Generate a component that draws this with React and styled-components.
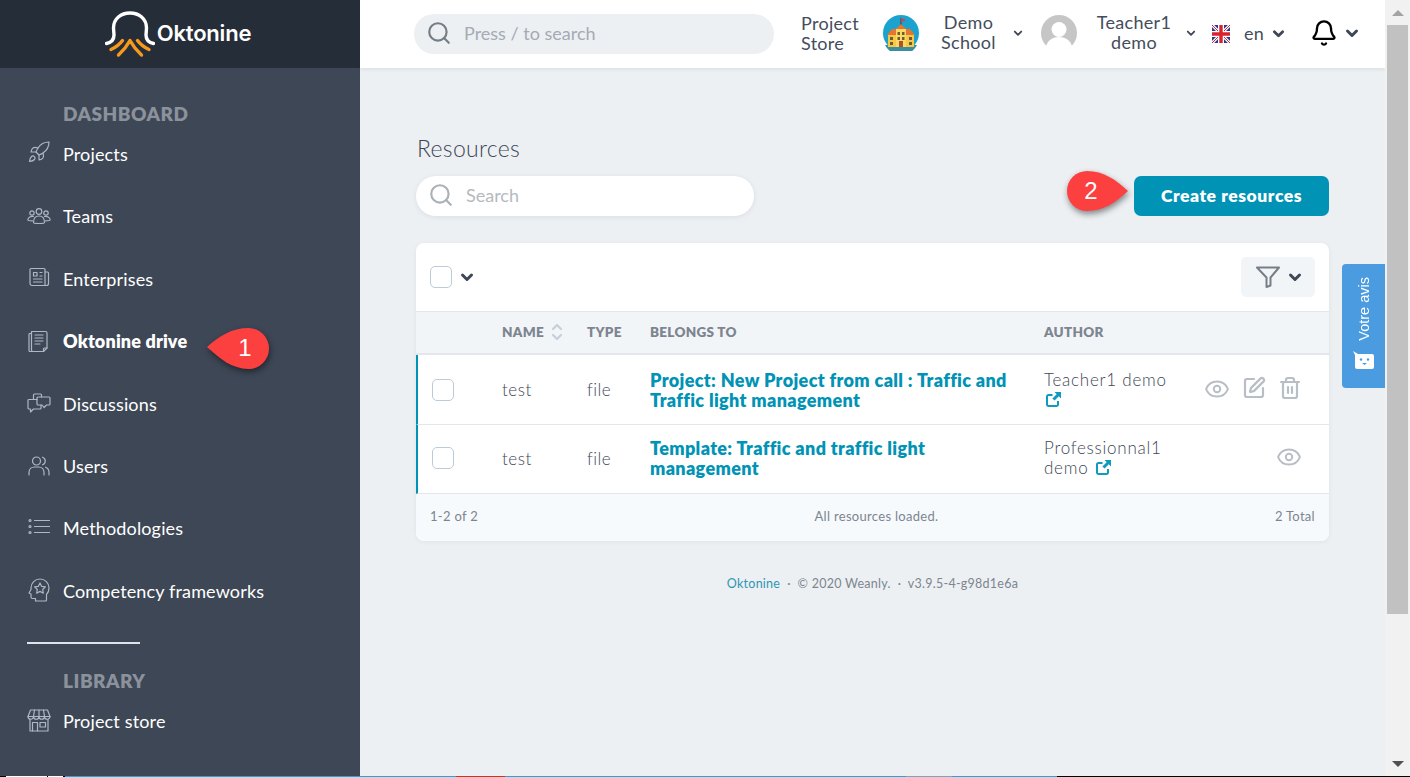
import React from 'react';
import styled, { createGlobalStyle } from 'styled-components';
import { Search, Eye, SquarePen, Trash2, Bell, Rocket } from 'lucide-react';

const FONT = '"Lato", "Open Sans", sans-serif';

const GlobalStyle = createGlobalStyle`
    html, body {
        margin: 0;
        padding: 0;
        height: 100%;
        overflow: hidden;
    }
    body {
        font-family: ${FONT};
        color: #3e4756;
        background: #ecf0f3;
    }
    * { box-sizing: border-box; }
`;

const Screen = styled.div`
    width: 1410px;
    height: 777px;
    display: flex;
    flex-direction: column;
    overflow: hidden;
`;

const Window = styled.div`
    flex: 1;
    min-height: 0;
    display: flex;
    position: relative;
`;

/* sidebar */
const Sidebar = styled.aside`
    width: 360px;
    flex: none;
    background: #3e4756;
    color: #fff;
`;

const LogoBar = styled.div`
    height: 68px;
    background: #252d38;
    display: flex;
    align-items: center;
    justify-content: center;
    gap: 2px;
    padding-right: 4px;
`;

const LogoText = styled.span`
    font-family: "Inter", sans-serif;
    font-size: 22px;
    font-weight: 600;
    letter-spacing: -0.2px;
    position: relative;
    top: -1px;
`;

const Nav = styled.nav`
    padding: 35px 0 0 27px;
`;

const NavHeading = styled.div`
    height: 19.8px;
    line-height: 22px;
    padding-left: 36px;
    font-size: 19px;
    font-weight: 800;
    letter-spacing: 0.5px;
    color: #8b929c;
    margin-top: ${p => p.$top || 0}px;
`;

const NavItem = styled.a`
    height: 62.4px;
    display: flex;
    align-items: center;
    font-size: 18px;
    letter-spacing: 0.15px;
    font-weight: ${p => (p.$active ? 800 : 400)};
    color: #fff;

    svg {
        width: 24px;
        height: 24px;
        margin-right: 12px;
        margin-top: ${p => p.$iconShift || 0}px;
        color: #aeb8c4;
        flex: none;
        fill: none;
        stroke: currentColor;
        stroke-width: 1.2;
        stroke-linecap: round;
        stroke-linejoin: round;
    }
`;

const NavRule = styled.div`
    width: 113px;
    height: 2px;
    margin-top: 20px;
    background: #dfe4ea;
`;

/* top bar */
const Page = styled.div`
    flex: 1;
    min-width: 0;
    display: flex;
    flex-direction: column;
`;

const TopBar = styled.header`
    height: 68px;
    flex: none;
    background: #fff;
    box-shadow: 0 1px 4px rgba(62, 71, 86, .12);
    display: flex;
    align-items: center;
    padding: 0 0 2px 54px;
`;

const SearchBox = styled.div`
    height: 40px;
    flex: none;
    border-radius: 20px;
    display: flex;
    align-items: center;
    gap: 12px;
    padding: 0 0 2px 12px;
    font-size: 18px;
    color: #a4abb4;
`;

const HeaderSearch = styled(SearchBox)`
    width: 360px;
    margin-top: 2px;
    background: #edf0f3;

    svg { color: #757d85; }
`;

const PageSearch = styled(SearchBox)`
    width: 338px;
    background: #fff;
    color: #b5bac0;
    box-shadow: 0 1px 5px rgba(62, 71, 86, .1);

    svg { color: #aab1b8; }
`;

const HeaderText = styled.div`
    width: ${p => p.$w}px;
    margin-left: ${p => p.$ml || 0}px;
    margin-top: ${p => p.$mt || 0}px;
    font-size: 18px;
    line-height: 20px;
    letter-spacing: 0.3px;
    text-align: ${p => p.$align || 'center'};
    color: #444d5c;
    flex: none;
`;

const Avatar = styled.svg`
    width: 36px;
    height: 36px;
    margin-left: ${p => p.$ml || 0}px;
    flex: none;
`;

const Caret = styled.svg`
    width: ${p => p.$size || 13}px;
    height: ${p => p.$size || 13}px;
    margin-left: ${p => p.$ml || 0}px;
    flex: none;
    fill: none;
    stroke: #3e4756;
    stroke-width: ${p => p.$weight || 3};
    stroke-linecap: round;
    stroke-linejoin: round;
`;

const Flag = styled.svg`
    width: 18px;
    height: 18px;
    margin: 2px 0 0 16px;
    flex: none;
`;

const BellButton = styled.span`
    display: flex;
    margin-left: 25px;
    color: #000;
`;

/* content */
const Content = styled.main`
    flex: 1;
    padding: 68px 56px 0 56px;
`;

const Title = styled.h1`
    margin: 0 0 0 1px;
    height: 26px;
    line-height: 24px;
    font-size: 23px;
    font-weight: 300;
    letter-spacing: 0.3px;
    color: #3e4756;
`;

const ToolRow = styled.div`
    display: flex;
    justify-content: space-between;
    align-items: center;
    margin-top: 14px;
`;

const PrimaryButton = styled.button`
    width: 195px;
    height: 40px;
    padding: 0 0 2px;
    border: none;
    border-radius: 7px;
    background: #0093b5;
    color: #fff;
    font-family: ${FONT};
    font-size: 17.5px;
    font-weight: 800;
    letter-spacing: 0.55px;
`;

const Card = styled.section`
    margin-top: 27px;
    border-radius: 8px;
    background: #fff;
    box-shadow: 0 1px 4px rgba(62, 71, 86, .08);
    overflow: hidden;
`;

const CardTools = styled.div`
    height: 68px;
    display: flex;
    align-items: center;
    justify-content: space-between;
    padding: 0 14px;
`;

const BulkSelect = styled.div`
    display: flex;
    align-items: center;
    gap: 8px;
`;

const CheckBox = styled.span`
    display: block;
    width: 22px;
    height: 22px;
    border: 1px solid #bccbd9;
    border-radius: 5px;
    background: #fff;
`;

const FilterButton = styled.div`
    width: 74px;
    height: 40px;
    border-radius: 5px;
    background: #f2f5f8;
    display: flex;
    align-items: center;
    justify-content: center;
    gap: 7px;
`;

const HeadRow = styled.div`
    display: grid;
    grid-template-columns: 86px 85px 63px 394px 134px 1fr;
    align-items: center;
    height: 44px;
    padding-bottom: 2px;
    background: #f2f5f8;
    border-top: 1px solid #e3e7ec;
    border-bottom: 2px solid #e3e7ec;
    font-size: 13.5px;
    font-weight: 800;
    letter-spacing: 0.28px;
    color: #7d8590;
`;

const HeadCell = styled.div`
    display: flex;
    align-items: center;
    gap: 7px;
`;

const Row = styled.div`
    display: grid;
    grid-template-columns: 84px 85px 63px 394px 134px 1fr;
    align-items: center;
    height: ${p => p.$h}px;
    padding-bottom: ${p => p.$pb || 0}px;
    border-left: 2px solid #0093b5;
    border-bottom: 1px solid #e3e7ec;
    font-size: 17px;
    font-weight: 300;
    letter-spacing: 0.5px;
`;

const CheckCell = styled.div`
    padding-left: 14px;
`;

const RowLink = styled.a`
    padding-right: 14px;
    font-size: 18px;
    font-weight: 800;
    line-height: 20px;
    letter-spacing: 0.35px;
    color: #0093b5;
`;

const Author = styled.div`
    line-height: 20px;
    letter-spacing: 0.75px;

    svg {
        margin-left: 2px;
        vertical-align: -1px;
    }
`;

const RowActions = styled.div`
    display: flex;
    justify-content: flex-end;
    gap: 12px;
    padding: 0 27px 2px 0;
    color: #b8bec5;
`;

const CardFooter = styled.div`
    height: 47px;
    display: grid;
    grid-template-columns: 1fr auto 1fr;
    align-items: center;
    padding: 0 14px 4px;
    background: #f6fafd;
    font-size: 13px;
    letter-spacing: 0.3px;
    color: #7d8590;
`;

const FooterCentre = styled.span`
    padding-left: 8px;
`;

const FooterRight = styled.span`
    text-align: right;
`;

const Credits = styled.p`
    margin: 34px 0 0;
    text-align: center;
    font-size: 12.5px;
    line-height: 18px;
    letter-spacing: 0.26px;
    color: #7d8590;

    a { color: #2f96b4; }
`;

/* overlays */
const Callout = styled.div`
    position: absolute;
    left: ${p => p.$x}px;
    top: ${p => p.$y}px;
    width: 66px;
    height: 44px;
    display: flex;
    align-items: center;
    justify-content: center;
    color: #fff;
    font-family: "Liberation Sans", sans-serif;
    font-size: 24px;

    svg {
        position: absolute;
        inset: 0;
        overflow: visible;
        filter: drop-shadow(1px 3px 3px rgba(0, 0, 0, .45));
    }
    span {
        position: relative;
        left: ${p => p.$textShift}px;
    }
`;

const FeedbackTab = styled.div`
    position: absolute;
    left: 1342px;
    top: 264px;
    width: 43px;
    height: 124px;
    border-radius: 4px 0 0 4px;
    background: #4a9be0;
    color: #fff;
    display: flex;
    flex-direction: column;
    align-items: center;
    padding-top: 13px;
    gap: 10px;
    font-family: "Liberation Sans", sans-serif;
    font-size: 14.5px;
`;

const FeedbackLabel = styled.span`
    writing-mode: vertical-rl;
    transform: rotate(180deg);
`;

/* browser chrome */
const Scrollbar = styled.div`
    width: 25px;
    flex: none;
    background: #f1f1f1;
    display: flex;
    flex-direction: column;
    align-items: center;
`;

const ScrollArrow = styled.div`
    height: 25px;
    flex: none;
    display: flex;
    align-items: center;
    justify-content: center;

    &::before {
        content: "";
        border-left: 6px solid transparent;
        border-right: 6px solid transparent;
        ${p => (p.$down
            ? 'border-top: 6px solid #505050;'
            : 'border-bottom: 6px solid #a3a3a3;')}
    }
`;

const ScrollThumb = styled.div`
    width: 21px;
    height: 589px;
    background: #c1c1c1;
`;

const ScrollTrack = styled.div`
    flex: 1;
`;

const TaskStrip = styled.div`
    height: 1px;
    flex: none;
    display: flex;
`;

const StripPart = styled.span`
    width: ${p => p.$w}px;
    background: ${p => p.$c};
`;

const stripParts = [
    [6, '#000'], [41, '#fff'], [1, '#000'], [15, '#fff'], [2, '#000'],
    [391, '#1ca8e0'], [49, '#d23020'], [401, '#1ca8e0'], [46, '#7ba6b8'],
    [105, '#1ca8e0'], [353, '#000'],
];

const Chevron = props => (
    <Caret viewBox="0 0 14 14" {...props}>
        <path d="M2.5 5l4.5 4.5L11.5 5" />
    </Caret>
);

const TeamsIcon = () => (
    <svg viewBox="0 0 24 24">
        <circle cx="12" cy="7.5" r="2.8" />
        <circle cx="5" cy="9" r="2.2" />
        <circle cx="19" cy="9" r="2.2" />
        <path d="M6.5 18.5c0-4.5 2-6.5 5.5-6.5s5.5 2 5.5 6.5c0 .7-1 1-5.5 1s-5.5-.3-5.5-1z" />
        <path d="M6.5 12.5C4 12 1 13 .8 16c0 .5.5.8 4.7.8" />
        <path d="M17.5 12.5c2.5-.5 5.5.5 5.7 3.5 0 .5-.5.8-4.7.8" />
    </svg>
);

const PaperIcon = () => (
    <svg viewBox="0 0 24 24" strokeWidth="1.5">
        <path d="M4 3.5h13a1 1 0 0 1 1 1v16H5a2 2 0 0 1-2-2v-14a1 1 0 0 1 1-1z" />
        <path d="M18 7h2.5a1 1 0 0 1 1 1v10.5a2 2 0 0 1-2 2H18" />
        <path d="M6.5 7.5H10V11H6.5zM13 7.5h2M13 11h2M6.5 14H15M6.5 17H15" />
    </svg>
);

const DriveIcon = () => (
    <svg viewBox="0 0 24 24">
        <path d="M4.5 2.5h14A1.5 1.5 0 0 1 20 4v15l-3.5 3.5H6A1.5 1.5 0 0 1 4.5 21z" />
        <path d="M4.5 4.5H3a1 1 0 0 0-1 1v16a1 1 0 0 0 1 1h12" />
        <path d="M20 19h-2.5a1 1 0 0 0-1 1v2.5" />
        <path d="M8 6h8M8 9h8M8 12h8M8 15h5" />
    </svg>
);

const ChatIcon = () => (
    <svg viewBox="0 0 24 24">
        <path d="M14.5 6V4a1 1 0 0 0-1-1h-6a1 1 0 0 0-1 1v4.5" />
        <path d="M10 8.5H2a1 1 0 0 0-1 1V17a1 1 0 0 0 1 1h1.5v3l3-3H13a1 1 0 0 0 1-1v-3" />
        <path d="M11 6h11a1 1 0 0 1 1 1v6a1 1 0 0 1-1 1h-2.5L17 16.5 15 14h-4a1 1 0 0 1-1-1V7a1 1 0 0 1 1-1z" />
    </svg>
);

const UsersIcon = () => (
    <svg viewBox="0 0 24 24" strokeWidth="1.4">
        <circle cx="9.5" cy="7" r="4" />
        <path d="M2 21v-2.5C2 15 4.5 13 7.5 13h4c3 0 5.5 2 5.5 5.5V21" />
        <path d="M15.5 3.2a4 4 0 0 1 0 7.6" />
        <path d="M18.5 13.2c2.2.7 3.5 2.500 3.5 5.3V21" />
    </svg>
);

const ListIcon = () => (
    <svg viewBox="0 0 24 24" strokeWidth="1.3">
        <path d="M7.5 5.5h15M7.5 11.5h15M7.5 17.5h15" />
        <circle cx="3" cy="5.5" r="1" />
        <circle cx="3" cy="11.5" r="1" />
        <circle cx="3" cy="17.5" r="1" />
    </svg>
);

const HeadIcon = () => (
    <svg viewBox="0 0 24 24">
        <path d="M8.5 23v-2.5h-3A1.5 1.5 0 0 1 4 19v-3l-2-1 2-3.5V10a9 9 0 0 1 18 0c0 3-1 5-2.5 6.5V22a1 1 0 0 1-1 1z" />
        <path d="M13 5l1.7 3.4 3.7.5-2.7 2.6.6 3.7-3.3-1.8-3.3 1.8.6-3.7-2.7-2.6 3.7-.5z" />
    </svg>
);

const StoreIcon = () => (
    <svg viewBox="0 0 24 24">
        <path d="M3.5 2h17L23 8.500H1z" />
        <path d="M1 8.5a2.750 2.750 0 0 0 5.5 0 2.750 2.750 0 0 0 5.500 0 2.750 2.750 0 0 0 5.500 0 2.750 2.750 0 0 0 5.500 0" />
        <path d="M7.5 2L6.500 8.500M12 2v6.500M16.500 2l1 6.500" />
        <path d="M3 11.5V23h18V11.500" />
        <path d="M5.5 23v-8.500h5V23M13 14.500h5.500V19H13z" />
    </svg>
);

const LinkOutIcon = () => (
    <svg width="15" height="15" viewBox="0 0 15 15" fill="none">
        <path
            d="M6.5 3h-4A1.5 1.5 0 0 0 1 4.500v8A1.500 1.500 0 0 0 2.500 14h8a1.500 1.500 0 0 0 1.500-1.500V9"
            stroke="#0e9bbd"
            strokeWidth="2"
        />
        <path d="M8.5 0H15v6.500l-2.200-2.200-4.300 4.300-2.100-2.100 4.300-4.300z" fill="#0e9bbd" />
    </svg>
);

const LogoMark = () => (
    <svg width="50" height="47" viewBox="105 12 50 47" fill="none" strokeLinecap="round" strokeLinejoin="round">
        <path
            d="M106.5 44.5C111 43.500 114 41.500 114 36L113.500 29C113.500 19.500 121 14 130 14S146.500 19.500 146.500 29L146 36C146 41.500 149 43.500 153.500 44.500"
            stroke="#fff"
            strokeWidth="3.4"
        />
        <path
            d="M111 50.5C115.500 48.500 119.500 45.500 122.500 41.500M118.500 56C123 52 127 47 130 41.500C133 47 137 52 141.500 56M137.500 41.500C140.500 45.500 144.500 48.500 149 50.500"
            stroke="#f59a1c"
            strokeWidth="3.4"
        />
    </svg>
);

const SchoolAvatar = () => (
    <Avatar viewBox="0 0 36 36">
        <circle cx="18" cy="18" r="18" fill="#1ba3cf" />
        <path d="M18 3v7" stroke="#4a3a3a" strokeWidth="1" />
        <path d="M18 3l5 2-5 2z" fill="#c44" />
        <path d="M2 30h32a18 18 0 0 1-32 0z" fill="#3a8f9f" />
        <path d="M13 14l5-5 5 5z" fill="#e8742f" />
        <path d="M4 20l5-6h18l5 6z" fill="#e8742f" />
        <path d="M5 20h26v12H5z" fill="#f5c945" />
        <path d="M13 14h10v18H13z" fill="#fbd860" />
        <path d="M16 26h4v6h-4z" fill="#b0512a" />
        <path d="M7 22h3v3H7zM26 22h3v3h-3zM7 27h3v3H7zM26 27h3v3h-3zM14.5 17H17v3h-2.5zM19 17h2.5v3H19zM14.5 22H17v3h-2.5zM19 22h2.5v3H19z" fill="#6c5a3c" />
    </Avatar>
);

const UserAvatar = () => (
    <Avatar viewBox="0 0 36 36" $ml={18}>
        <circle cx="18" cy="18" r="18" fill="#c6c6c6" />
        <circle cx="18" cy="14.5" r="7.5" fill="#fff" />
        <path d="M5 31c2-6 7-9 13-9s11 3 13 9a18 18 0 0 1-26 0z" fill="#fff" />
    </Avatar>
);

const UkFlag = () => (
    <Flag viewBox="0 0 18 18">
        <path d="M0 0h18v18H0z" fill="#2b3990" />
        <path d="M0 0l18 18M18 0L0 18" stroke="#fff" strokeWidth="3" />
        <path d="M0 0l18 18M18 0L0 18" stroke="#d8232f" strokeWidth="1" />
        <path d="M9 0v18M0 9h18" stroke="#fff" strokeWidth="6" />
        <path d="M9 0v18M0 9h18" stroke="#d8232f" strokeWidth="3.4" />
    </Flag>
);

const FilterIcon = () => (
    <svg width="26" height="24" viewBox="0 0 26 24" fill="none" stroke="#767e87" strokeWidth="2" strokeLinejoin="round">
        <path d="M2 2.5h22l-8.500 10v8l-4 1.500v-9.500z" />
    </svg>
);

const SortIcon = () => (
    <svg width="12" height="18" viewBox="0 0 12 18" fill="none" stroke="#c6d0da" strokeWidth="2.2" strokeLinecap="round" strokeLinejoin="round">
        <path d="M2 6l4-4 4 4M2 12l4 4 4-4" />
    </svg>
);

const FaceIcon = () => (
    <svg width="22" height="18" viewBox="0 0 22 18">
        <path d="M0 0l5 3h14a2 2 0 0 1 2 2v11a2 2 0 0 1-2 2H4a2 2 0 0 1-2-2V4z" fill="#fff" />
        <circle cx="8" cy="8.5" r="1.2" fill="#4a9be0" />
        <circle cx="15" cy="8.5" r="1.2" fill="#4a9be0" />
        <path d="M9 12h5l-2.500 2z" fill="#4a9be0" />
    </svg>
);

const navTop = [
    { label: 'Projects', icon: <Rocket strokeWidth={1.5} />, shift: -3 },
    { label: 'Teams', icon: <TeamsIcon /> },
    { label: 'Enterprises', icon: <PaperIcon />, shift: -3 },
    { label: 'Oktonine drive', icon: <DriveIcon />, active: true },
    { label: 'Discussions', icon: <ChatIcon />, shift: -2 },
    { label: 'Users', icon: <UsersIcon /> },
    { label: 'Methodologies', icon: <ListIcon />, shift: -3 },
    { label: 'Competency frameworks', icon: <HeadIcon />, shift: -2 },
];

const rows = [
    { h: 70, link: 'Project: New Project from call : Traffic and Traffic light management', author: 'Teacher1 demo', actions: true },
    { h: 69, pb: 2, link: 'Template: Traffic and traffic light management', author: 'Professionnal1 demo' },
];

export default function App() {
    return (
        <Screen>
            <GlobalStyle />
            <Window>
                <Sidebar>
                    <LogoBar>
                        <LogoMark />
                        <LogoText>Oktonine</LogoText>
                    </LogoBar>
                    <Nav>
                        <NavHeading>DASHBOARD</NavHeading>
                        {navTop.map(item => (
                            <NavItem key={item.label} $active={item.active} $iconShift={item.shift}>
                                {item.icon}
                                {item.label}
                            </NavItem>
                        ))}
                        <NavRule />
                        <NavHeading $top={26}>LIBRARY</NavHeading>
                        <NavItem $iconShift={-2}>
                            <StoreIcon />
                            Project store
                        </NavItem>
                    </Nav>
                </Sidebar>
                <Page>
                    <TopBar>
                        <HeaderSearch>
                            <Search size={26} strokeWidth={2} />
                            Press / to search
                        </HeaderSearch>
                        <HeaderText $w={82} $ml={27} $align="left">Project<br />Store</HeaderText>
                        <SchoolAvatar />
                        <HeaderText $w={89} $ml={5} $mt={-2}>Demo<br />School</HeaderText>
                        <Chevron $size={10} $weight={2.5} />
                        <UserAvatar />
                        <HeaderText $w={104} $ml={5} $mt={-2}>Teacher1<br />demo</HeaderText>
                        <Chevron $size={10} $weight={2.5} />
                        <UkFlag />
                        <HeaderText $w={20} $ml={14}>en</HeaderText>
                        <Chevron $ml={8} />
                        <BellButton><Bell size={28} strokeWidth={2} /></BellButton>
                        <Chevron $ml={7} $size={14} />
                    </TopBar>
                    <Content>
                        <Title>Resources</Title>
                        <ToolRow>
                            <PageSearch>
                                <Search size={26} strokeWidth={2} />
                                Search
                            </PageSearch>
                            <PrimaryButton>Create resources</PrimaryButton>
                        </ToolRow>
                        <Card>
                            <CardTools>
                                <BulkSelect>
                                    <CheckBox />
                                    <Chevron $size={14} />
                                </BulkSelect>
                                <FilterButton>
                                    <FilterIcon />
                                    <Chevron $size={14} />
                                </FilterButton>
                            </CardTools>
                            <HeadRow>
                                <span />
                                <HeadCell>NAME <SortIcon /></HeadCell>
                                <HeadCell>TYPE</HeadCell>
                                <HeadCell>BELONGS TO</HeadCell>
                                <HeadCell>AUTHOR</HeadCell>
                            </HeadRow>
                            {rows.map(row => (
                                <Row key={row.link} $h={row.h} $pb={row.pb}>
                                    <CheckCell><CheckBox /></CheckCell>
                                    <span>test</span>
                                    <span>file</span>
                                    <RowLink>{row.link}</RowLink>
                                    <Author>{row.author} <LinkOutIcon /></Author>
                                    <RowActions>
                                        <Eye size={26} strokeWidth={1.8} />
                                        {row.actions && <SquarePen size={24} strokeWidth={2.2} />}
                                        {row.actions && <Trash2 size={24} strokeWidth={2.2} />}
                                    </RowActions>
                                </Row>
                            ))}
                            <CardFooter>
                                <span>1-2 of 2</span>
                                <FooterCentre>All resources loaded.</FooterCentre>
                                <FooterRight>2 Total</FooterRight>
                            </CardFooter>
                        </Card>
                        <Credits>
                            <a>Oktonine</a> &nbsp;·&nbsp; © 2020 Weanly. &nbsp;·&nbsp; v3.9.5-4-g98d1e6a
                        </Credits>
                    </Content>
                </Page>
                <Scrollbar>
                    <ScrollArrow />
                    <ScrollThumb />
                    <ScrollTrack />
                    <ScrollArrow $down />
                </Scrollbar>
                <Callout $x={205} $y={326} $textShift={7}>
                    <svg viewBox="0 0 66 44">
                        <path d="M2 21C14 10 27 2 43.5 2a20.5 20.5 0 0 1 0 41C27 43 14 32 2 21z" fill="#fc4040" />
                    </svg>
                    <span>1</span>
                </Callout>
                <Callout $x={1064} $y={169} $textShift={-6}>
                    <svg viewBox="0 0 66 44">
                        <path d="M64 22C52 11 40 2 23 2a20 20 0 0 0 0 40C40 42 52 33 64 22z" fill="#fc4040" />
                    </svg>
                    <span>2</span>
                </Callout>
                <FeedbackTab>
                    <FeedbackLabel>Votre avis</FeedbackLabel>
                    <FaceIcon />
                </FeedbackTab>
            </Window>
            <TaskStrip>
                {stripParts.map(([w, c], i) => <StripPart key={i} $w={w} $c={c} />)}
            </TaskStrip>
        </Screen>
    );
}
